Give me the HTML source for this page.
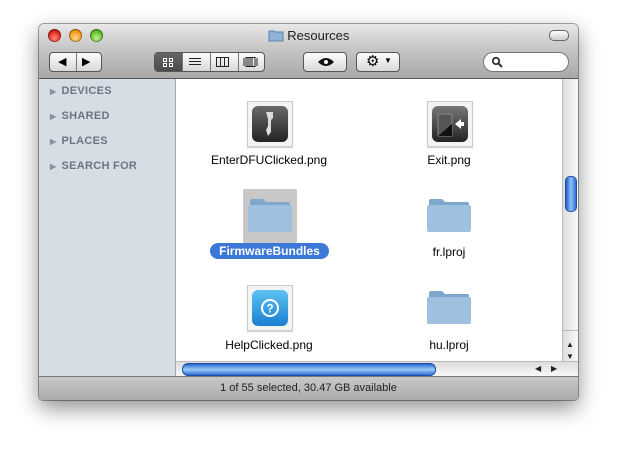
<!DOCTYPE html>
<html><head><style>
body{margin:0;width:618px;height:455px;background:#fff;position:relative;overflow:hidden;font-family:"Liberation Sans",sans-serif;}
.win{position:absolute;left:39px;top:24px;width:539px;height:376px;border-radius:5px 5px 4px 4px;box-shadow:0 8px 22px rgba(0,0,0,.45),0 0 0 1px rgba(0,0,0,.35);overflow:hidden;background:#fff}
.tb{position:absolute;left:0;top:0;width:539px;height:54px;background:linear-gradient(#e8e8e8,#c6c6c6 45%,#a8a8a8);border-bottom:1px solid #555}
.title{position:absolute;top:4px;left:0;width:100%;text-align:center;font-size:13px;color:#222}
.dot{position:absolute;top:5px;width:13px;height:13px;border-radius:50%;box-shadow:inset 0 0 0 1px rgba(0,0,0,.35)}
.btn{position:absolute;top:28px;height:20px;border:1px solid #555;border-radius:4px;background:linear-gradient(#fdfdfd,#d8d8d8);box-sizing:border-box}
.side{position:absolute;left:0;top:55px;width:136px;height:297px;background:#d6dde5;border-right:1px solid #a9a9a9}
.side div{position:absolute;left:11px;font-size:11px;font-weight:bold;color:#6b7585;letter-spacing:.3px}
.side span{font-size:8px;margin-right:5px;color:#8891a0}
.lbl{position:absolute;font-size:12px;color:#000;text-align:center;width:160px}
.ic{position:absolute;width:44px;height:44px;border:1px solid #ccc;background:#f4f4f4;box-shadow:0 1px 1px rgba(0,0,0,.2)}
.ic i{position:absolute;left:4px;top:4px;width:36px;height:36px;border-radius:6px}
.fold{position:absolute;width:46px;height:36px}
.status{position:absolute;left:0;top:352px;width:539px;height:24px;background:linear-gradient(#c9c9c9,#a9a9a9);border-top:1px solid #777;font-size:11px;color:#222;text-align:center;line-height:23px}
</style></head><body>
<div class="win">
 <div class="tb">
  <div class="dot" style="left:9px;background:radial-gradient(circle at 50% 70%,#ff8a7a,#d9241b 60%,#8e0d05)"></div>
  <div class="dot" style="left:30px;background:radial-gradient(circle at 50% 70%,#ffd38a,#f29a1a 60%,#a9600a)"></div>
  <div class="dot" style="left:51px;background:radial-gradient(circle at 50% 70%,#c4f28a,#5dbb28 60%,#2c7a0c)"></div>
  <div class="title"><svg width="16" height="13" style="vertical-align:-2px"><path d="M1 2h5l1 1h8v9H1z" fill="#8fb3d6" stroke="#5a82aa"/></svg> Resources</div>
  <div style="position:absolute;right:9px;top:6px;width:18px;height:9px;border:1px solid #666;border-radius:5px;background:linear-gradient(#fff,#ccc)"></div>
  <div class="btn" style="left:10px;width:53px"><span style="position:absolute;left:8px;top:2px;font-size:11px">◀</span><span style="position:absolute;left:26px;top:0;height:18px;border-left:1px solid #777"></span><span style="position:absolute;left:32px;top:2px;font-size:11px">▶</span></div>
  <div class="btn" style="left:115px;width:111px;overflow:hidden">
   <div style="position:absolute;left:0;top:0;width:27px;height:18px;background:linear-gradient(#666,#4a4a4a)"></div>
   <svg style="position:absolute;left:8px;top:5px" width="10" height="9"><g fill="none" stroke="#fff"><rect x=".5" y=".5" width="3" height="3"/><rect x="6.5" y=".5" width="3" height="3"/><rect x=".5" y="5.5" width="3" height="3"/><rect x="6.5" y="5.5" width="3" height="3"/></g></svg>
   <span style="position:absolute;left:27px;top:0;height:18px;border-left:1px solid #777"></span>
   <svg style="position:absolute;left:34px;top:5px" width="12" height="9"><path d="M0 .5h12M0 3.5h12M0 6.5h12" stroke="#222"/></svg>
   <span style="position:absolute;left:55px;top:0;height:18px;border-left:1px solid #777"></span>
   <svg style="position:absolute;left:61px;top:4px" width="13" height="10"><rect x=".5" y=".5" width="12" height="9" fill="none" stroke="#222"/><path d="M4.5 0v10M8.5 0v10" stroke="#222"/></svg>
   <span style="position:absolute;left:83px;top:0;height:18px;border-left:1px solid #777"></span>
   <svg style="position:absolute;left:88px;top:4px" width="15" height="10"><rect x="3" y=".5" width="9" height="9" fill="none" stroke="#222"/><path d="M1 1v8M14 1v8M5 1v8M7 1v8M9 1v8" stroke="#222"/></svg>
  </div>
  <div class="btn" style="left:264px;width:44px"><svg style="position:absolute;left:13px;top:4px" width="18" height="10"><path d="M1 5Q9-3 17 5Q9 13 1 5z" fill="#111"/><circle cx="9" cy="5" r="2" fill="#fff"/></svg></div>
  <div class="btn" style="left:317px;width:44px"><span style="position:absolute;left:9px;top:0px;font-size:15px;line-height:18px">⚙</span><span style="position:absolute;left:27px;top:3px;font-size:8px">▼</span></div>
  <div style="position:absolute;left:444px;top:28px;width:86px;height:20px;border-radius:10px;background:#fff;border:1px solid #777;box-sizing:border-box"><svg style="position:absolute;left:7px;top:3px" width="12" height="12"><circle cx="5" cy="5" r="3.2" fill="none" stroke="#333" stroke-width="1.8"/><path d="M7.5 7.5l3.5 3.5" stroke="#333" stroke-width="2"/></svg></div>
 </div>
 <div class="side">
  <div style="top:6px"><span>▶</span>DEVICES</div>
  <div style="top:31px"><span>▶</span>SHARED</div>
  <div style="top:56px"><span>▶</span>PLACES</div>
  <div style="top:81px"><span>▶</span>SEARCH FOR</div>
 </div>
 <div class="ic" style="left:208px;top:77px"><i style="background:linear-gradient(#6a6a6a,#222)"></i><svg style="position:absolute;left:14px;top:8px" width="16" height="30"><path d="M4 2h7v6l-2 2v12l-3 4-2-6 2-4V9z" fill="#ddd"/></svg></div>
 <div class="lbl" style="left:150px;top:129px">EnterDFUClicked.png</div>
 <div class="ic" style="left:388px;top:77px"><i style="background:linear-gradient(#777,#222)"></i><svg style="position:absolute;left:8px;top:10px" width="30" height="26"><path d="M2 2h14v22H2z" fill="#555" stroke="#888"/><path d="M2 24L16 12v12z" fill="#111"/><path d="M19 12l6-5v3h3v4h-3v3z" fill="#fff"/></svg></div>
 <div class="lbl" style="left:330px;top:129px">Exit.png</div>
 <div style="position:absolute;left:204px;top:165px;width:54px;height:54px;background:#c8c8c8;border-radius:2px"></div>
 <svg class="fold" style="left:208px;top:174px" viewBox="0 0 46 36"><path d="M3 3Q3 1 5 1h11l3 3h22q2 0 2 2v26H3z" fill="#7fa6cb"/><path d="M1 9q0-2 2-2h40q2 0 2 2v23q0 2-2 2H3q-2 0-2-2z" fill="#9fc0de"/></svg>
 <div style="position:absolute;left:171px;top:219px;width:119px;height:16px;border-radius:8px;background:#3b78d8;color:#fff;font-size:12px;font-weight:bold;text-align:center;line-height:16px">FirmwareBundles</div>
 <svg class="fold" style="left:387px;top:174px" viewBox="0 0 46 36"><path d="M3 3Q3 1 5 1h11l3 3h22q2 0 2 2v26H3z" fill="#7fa6cb"/><path d="M1 9q0-2 2-2h40q2 0 2 2v23q0 2-2 2H3q-2 0-2-2z" fill="#9fc0de"/></svg>
 <div class="lbl" style="left:330px;top:221px">fr.lproj</div>
 <div class="ic" style="left:208px;top:261px"><i style="background:linear-gradient(#5cc2f2,#1a7fd0)"></i><svg style="position:absolute;left:12px;top:12px" width="20" height="20"><circle cx="10" cy="10" r="8" fill="none" stroke="#fff" stroke-width="2"/><text x="10" y="14.5" font-size="12" font-weight="bold" fill="#fff" text-anchor="middle" font-family="Liberation Sans">?</text></svg></div>
 <div class="lbl" style="left:150px;top:314px">HelpClicked.png</div>
 <svg class="fold" style="left:387px;top:266px" viewBox="0 0 46 36"><path d="M3 3Q3 1 5 1h11l3 3h22q2 0 2 2v26H3z" fill="#7fa6cb"/><path d="M1 9q0-2 2-2h40q2 0 2 2v23q0 2-2 2H3q-2 0-2-2z" fill="#9fc0de"/></svg>
 <div class="lbl" style="left:330px;top:314px">hu.lproj</div>
 <div style="position:absolute;left:523px;top:55px;width:16px;height:282px;background:linear-gradient(90deg,#ddd,#fafafa);border-left:1px solid #bbb"></div>
 <div style="position:absolute;left:526px;top:152px;width:10px;height:34px;border-radius:5px;background:linear-gradient(90deg,#1f5fc8,#8ec0f5,#2e6fd6);border:1px solid #1d4f9e"></div>
 <div style="position:absolute;left:524px;top:306px;width:15px;border-top:1px solid #bbb"></div>
 <div style="position:absolute;left:527px;top:316px;font-size:8px;color:#222">▲</div>
 <div style="position:absolute;left:527px;top:328px;font-size:8px;color:#222">▼</div>
 <div style="position:absolute;left:137px;top:337px;width:402px;height:15px;background:linear-gradient(#ddd,#fafafa);border-top:1px solid #bbb"></div>
 <div style="position:absolute;left:143px;top:339px;width:252px;height:11px;border-radius:6px;background:linear-gradient(#2566cf,#9ccaf7,#2e6fd6);border:1px solid #1d4f9e"></div>
 <div style="position:absolute;left:496px;top:340px;font-size:8px;color:#222">◀</div>
 <div style="position:absolute;left:512px;top:340px;font-size:8px;color:#222">▶</div>
 <div class="status">1 of 55 selected, 30.47 GB available</div>
</div>
</body></html>
